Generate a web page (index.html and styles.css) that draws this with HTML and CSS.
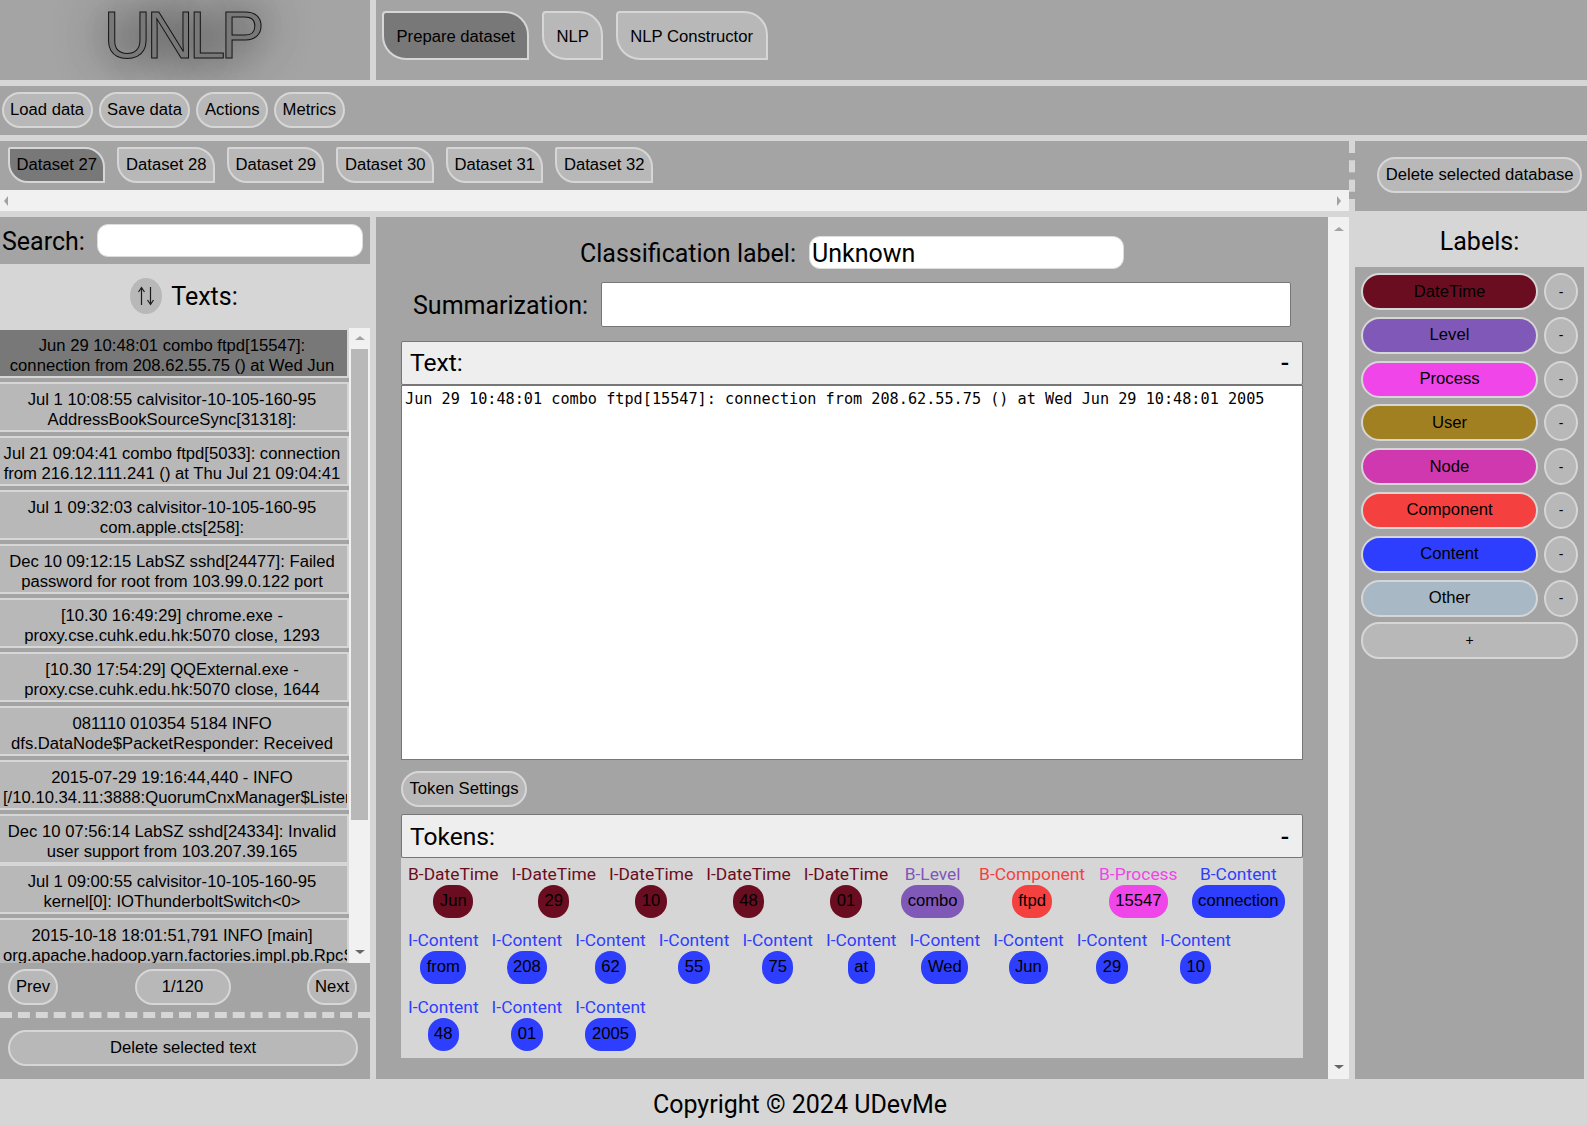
FILE: index.html
```html
<!DOCTYPE html>
<html lang="en">
<head>
<meta charset="utf-8">
<title>UNLP</title>
<link rel="stylesheet" href="styles.css">
</head>
<body>
<header class="top">
  <div class="logo"><span class="logo-text">UNLP</span></div>
  <nav class="nav">
    <button class="tab tab-big active">Prepare dataset</button>
    <button class="tab tab-big">NLP</button>
    <button class="tab tab-big">NLP Constructor</button>
  </nav>
</header>
<div class="toolbar">
  <button class="btn">Load data</button>
  <button class="btn">Save data</button>
  <button class="btn">Actions</button>
  <button class="btn">Metrics</button>
</div>
<div class="datasets">
  <div class="datasets-main">
    <div class="dataset-tabs">
      <button class="tab active">Dataset 27</button>
      <button class="tab">Dataset 28</button>
      <button class="tab">Dataset 29</button>
      <button class="tab">Dataset 30</button>
      <button class="tab">Dataset 31</button>
      <button class="tab">Dataset 32</button>
    </div>
    <div class="hscroll"><i class="arrow arrow-left"></i><i class="arrow arrow-right"></i></div>
  </div>
  <div class="datasets-side"><button class="btn">Delete selected database</button></div>
</div>
<main class="main">
  <aside class="left">
    <div class="search"><label class="h-text">Search:</label><input class="search-input" type="text"></div>
    <div class="texts-head">
      <button class="sort" aria-label="Sort">
        <svg class="sort-icon" width="18" height="20" viewBox="0 0 18 20" fill="none" stroke="#1a1a1a" stroke-width="1.2"><path d="M4.5 19V1.5M1.5 6 4.5 1.5 7.5 6"/><path d="M13.5 1V18.5M10.5 14 13.5 18.5 16.5 14"/></svg>
      </button>
      <span class="h-text">Texts:</span>
    </div>
    <div class="list-wrap">
      <div class="list">
        <div class="item selected">Jun 29 10:48:01 combo ftpd[15547]: connection from 208.62.55.75 () at Wed Jun 29 10:48:01 2005</div>
        <div class="item">Jul 1 10:08:55 calvisitor-10-105-160-95 AddressBookSourceSync[31318]: [ABSourceSyncManagerFromLocalStore]</div>
        <div class="item">Jul 21 09:04:41 combo ftpd[5033]: connection from 216.12.111.241 () at Thu Jul 21 09:04:41 2005</div>
        <div class="item">Jul 1 09:32:03 calvisitor-10-105-160-95 com.apple.cts[258]: com.apple.SocialPushAgent.AddressBookSync</div>
        <div class="item">Dec 10 09:12:15 LabSZ sshd[24477]: Failed password for root from 103.99.0.122 port 39544 ssh2</div>
        <div class="item">[10.30 16:49:29] chrome.exe - proxy.cse.cuhk.edu.hk:5070 close, 1293 bytes sent</div>
        <div class="item">[10.30 17:54:29] QQExternal.exe - proxy.cse.cuhk.edu.hk:5070 close, 1644 bytes sent</div>
        <div class="item">081110 010354 5184 INFO dfs.DataNode$PacketResponder: Received block blk_123</div>
        <div class="item">2015-07-29 19:16:44,440 - INFO [/10.10.34.11:3888:QuorumCnxManager$Listener@493]</div>
        <div class="item item-tight">Dec 10 07:56:14 LabSZ sshd[24334]: Invalid user support from 103.207.39.165</div>
        <div class="item">Jul 1 09:00:55 calvisitor-10-105-160-95 kernel[0]: IOThunderboltSwitch&lt;0&gt;</div>
        <div class="item">2015-10-18 18:01:51,791 INFO [main] org.apache.hadoop.yarn.factories.impl.pb.RpcServerFactoryPBImpl</div>
      </div>
      <div class="vscroll list-scroll"><i class="arrow arrow-up"></i><div class="thumb"></div><i class="arrow arrow-down"></i></div>
    </div>
    <div class="pager">
      <button class="btn">Prev</button>
      <button class="btn page-count">1/120</button>
      <button class="btn">Next</button>
    </div>
    <div class="delete-row"><button class="btn wide">Delete selected text</button></div>
  </aside>

  <section class="center">
    <div class="center-body">
      <div class="field-row">
        <label class="h-text">Classification label:</label>
        <input class="class-input" type="text" value="Unknown">
      </div>
      <div class="field-row summary-row">
        <label class="h-text">Summarization:</label>
        <input class="summary-input" type="text">
      </div>
      <div class="panel-head panel-text"><span>Text:</span><span class="collapse">-</span></div>
      <div class="text-box">Jun 29 10:48:01 combo ftpd[15547]: connection from 208.62.55.75 () at Wed Jun 29 10:48:01 2005</div>
      <div class="settings-row"><button class="btn">Token Settings</button></div>
      <div class="panel-head"><span>Tokens:</span><span class="collapse">-</span></div>
      <div class="tokens">
        <div class="tok c-date"><span class="tok-label">B-DateTime</span><span class="chip">Jun</span></div>
        <div class="tok c-date"><span class="tok-label">I-DateTime</span><span class="chip">29</span></div>
        <div class="tok c-date"><span class="tok-label">I-DateTime</span><span class="chip">10</span></div>
        <div class="tok c-date"><span class="tok-label">I-DateTime</span><span class="chip">48</span></div>
        <div class="tok c-date"><span class="tok-label">I-DateTime</span><span class="chip">01</span></div>
        <div class="tok c-level"><span class="tok-label">B-Level</span><span class="chip">combo</span></div>
        <div class="tok c-comp"><span class="tok-label">B-Component</span><span class="chip">ftpd</span></div>
        <div class="tok c-proc"><span class="tok-label">B-Process</span><span class="chip">15547</span></div>
        <div class="tok c-cont c-lead"><span class="tok-label">B-Content</span><span class="chip">connection</span></div>
        <div class="tok c-cont"><span class="tok-label">I-Content</span><span class="chip">from</span></div>
        <div class="tok c-cont"><span class="tok-label">I-Content</span><span class="chip">208</span></div>
        <div class="tok c-cont"><span class="tok-label">I-Content</span><span class="chip">62</span></div>
        <div class="tok c-cont"><span class="tok-label">I-Content</span><span class="chip">55</span></div>
        <div class="tok c-cont"><span class="tok-label">I-Content</span><span class="chip">75</span></div>
        <div class="tok c-cont"><span class="tok-label">I-Content</span><span class="chip">at</span></div>
        <div class="tok c-cont"><span class="tok-label">I-Content</span><span class="chip">Wed</span></div>
        <div class="tok c-cont"><span class="tok-label">I-Content</span><span class="chip">Jun</span></div>
        <div class="tok c-cont"><span class="tok-label">I-Content</span><span class="chip">29</span></div>
        <div class="tok c-cont"><span class="tok-label">I-Content</span><span class="chip">10</span></div>
        <div class="tok c-cont"><span class="tok-label">I-Content</span><span class="chip">48</span></div>
        <div class="tok c-cont"><span class="tok-label">I-Content</span><span class="chip">01</span></div>
        <div class="tok c-cont"><span class="tok-label">I-Content</span><span class="chip">2005</span></div>
      </div>
    </div>
    <div class="vscroll main-scroll"><i class="arrow arrow-up"></i><i class="arrow arrow-down"></i></div>
  </section>

  <aside class="right">
    <div class="labels-head h-text">Labels:</div>
    <div class="labels">
      <div class="label-row"><button class="btn pill l-date">DateTime</button><button class="btn minus">-</button></div>
      <div class="label-row"><button class="btn pill l-level">Level</button><button class="btn minus">-</button></div>
      <div class="label-row"><button class="btn pill l-proc">Process</button><button class="btn minus">-</button></div>
      <div class="label-row"><button class="btn pill l-user">User</button><button class="btn minus">-</button></div>
      <div class="label-row"><button class="btn pill l-node">Node</button><button class="btn minus">-</button></div>
      <div class="label-row"><button class="btn pill l-comp">Component</button><button class="btn minus">-</button></div>
      <div class="label-row"><button class="btn pill l-cont">Content</button><button class="btn minus">-</button></div>
      <div class="label-row"><button class="btn pill l-other">Other</button><button class="btn minus">-</button></div>
      <button class="btn add">+</button>
    </div>
  </aside>
</main>
<footer class="footer">Copyright © 2024 UDevMe</footer>
</body>
</html>
```
FILE: styles.css
```css
* { box-sizing: border-box; }
html, body { margin: 0; height: 1125px; overflow: hidden; }
body { background: #d6d6d6; color: #000; font-family: "Liberation Sans", Arial, sans-serif; font-size: 16.65px; }
button { font: inherit; color: #000; cursor: pointer; }
input { outline: none; }
.h-text { font-family: Roboto, sans-serif; font-size: 25px; }

.top { display: flex; height: 80px; }
.logo { width: 370px; background: #a4a4a4; display: flex; justify-content: center; overflow: hidden; padding-right: 7px; }
.logo-text { font-family: "Liberation Sans", Arial, sans-serif; font-size: 66px; line-height: 70px; letter-spacing: -5px; color: #787878; -webkit-text-stroke: 1px #111; text-shadow: 0 0 40px rgba(0,0,0,.7), 0 0 60px rgba(0,0,0,.35); }
.nav { margin-left: 6px; flex: 1; background: #a4a4a4; display: flex; gap: 12.5px; padding: 11px 6px; align-items: flex-start; }

.tab { background: #b8b8b8; border: 2px solid #d6d6d6; border-radius: 4px 24px 0 24px; height: 36px; padding: 0 14px; }
.tab-big { height: 49px; padding: 2px 12.5px 0; }
.tab.active { background: #787878; }

.btn { background: #b8b8b8; border: 2px solid #d6d6d6; border-radius: 18px; height: 36px; padding: 0 6.5px; white-space: nowrap; }

.toolbar { margin-top: 6px; height: 49px; background: #a4a4a4; display: flex; gap: 6px; align-items: flex-start; padding: 6px 0 0 1.5px; }

.datasets { margin-top: 6px; height: 70px; display: flex; }
.datasets-main { width: 1349px; }
.dataset-tabs { height: 49px; background: #a4a4a4; display: flex; gap: 12px; padding: 6px 8px; }
.dataset-tabs .tab { padding: 0 6.5px; border-radius: 2px 20px 0 20px; }
.hscroll { height: 21px; background: #f1f1f1; display: flex; justify-content: space-between; align-items: center; padding: 0 8px 0 4px; }
.datasets-side { flex: 1; background: #a4a4a4; border-left: 6px dashed #d6d6d6; display: flex; justify-content: flex-end; align-items: flex-start; padding: 16px 5px 0 0; }

.arrow { display: block; width: 0; height: 0; border: 4px solid transparent; }
.arrow-left { border-left: 0; border-right-color: #a3a3a3; border-width: 5px 4px 5px 0; }
.arrow-right { border-right: 0; border-left-color: #a3a3a3; border-width: 5px 0 5px 4px; }
.arrow-up { border-top: 0; border-bottom-color: #a3a3a3; border-width: 0 5px 4px 5px; }
.arrow-down { border-bottom: 0; border-top-color: #666; border-width: 4px 5px 0 5px; }

.main { margin-top: 6px; height: 862px; display: flex; }
.left { width: 370px; display: flex; flex-direction: column; }
.search { height: 47px; background: #a4a4a4; display: flex; align-items: center; padding: 1px 7px 0 2px; justify-content: space-between; }
.search-input { width: 266px; height: 33px; margin-top: -1px; border: 1px solid #ddd; border-radius: 11px; background: #fff; }
.texts-head { height: 64px; display: flex; justify-content: center; align-items: center; gap: 9px; padding-right: 2px; }
.sort { width: 32px; height: 36px; border: 0; padding: 0; border-radius: 50%; background: #b8b8b8; display: flex; align-items: center; justify-content: center; }
.sort-icon { display: block; }
.list-wrap { height: 635px; display: flex; }
.list { width: 349px; background: #a4a4a4; overflow: hidden; }
.item { height: 50px; margin-bottom: 4px; border: 2px solid #d6d6d6; border-left: 0; background: #b8b8b8; padding: 6px 6px 0 3px; text-align: center; line-height: 20px; overflow: hidden; }
.item-tight { margin-bottom: 0; }
.item.selected { background: #787878; }
.vscroll { width: 21px; background: #f1f1f1; display: flex; flex-direction: column; align-items: center; justify-content: space-between; padding: 8px 0; flex-shrink: 0; }
.main-scroll { padding: 10px 0; }
.list-scroll { justify-content: flex-start; padding: 8px 0 0; }
.list-scroll .arrow-down { margin-top: 130px; }
.thumb { width: 17px; height: 471px; background: #b8b8b8; margin-top: 9px; flex-shrink: 0; }
.pager { height: 49px; background: #a4a4a4; display: flex; justify-content: space-between; padding: 6px 13px 0 8px; }
.page-count { width: 96px; }
.pager .btn:first-child, .pager .btn:last-child { width: 50px; padding: 0; }
.delete-row { flex: 1; background: #a4a4a4; border-top: 6px dashed #d6d6d6; padding: 12px 12px 0 8px; }
.wide { width: 100%; }

.center { width: 973px; margin-left: 6px; background: #a4a4a4; display: flex; }
.center-body { flex: 1; padding: 19px 25px 0; }
.field-row { display: flex; justify-content: center; align-items: center; gap: 13px; height: 33px; }
.field-row label { padding-top: 2px; }
.summary-row { height: 45px; margin-top: 13px; margin-bottom: 14px; }
.class-input { width: 315px; height: 33px; border: 1px solid #ddd; border-radius: 11px; background: #fff; font-family: Roboto, sans-serif; font-size: 25px; padding: 2px 2px 0; }
.summary-input { width: 690px; height: 45px; border: 1px solid #777; border-radius: 2px; background: #fff; }
.panel-head { height: 44px; background: #eee; border: 1px solid #777; border-radius: 2px; display: flex; justify-content: space-between; align-items: center; padding: 0 13px 0 8px; font-family: Roboto, sans-serif; font-size: 24.6px; width: 902px; }
.panel-text { padding-bottom: 2px; }
.collapse { font-weight: 500; }
.text-box { width: 902px; height: 375px; background: #fff; border: 1px solid #777; padding: 3px 3px; font-family: "DejaVu Sans Mono", monospace; font-size: 15.2px; line-height: 20px; }
.settings-row { height: 54px; padding-top: 11px; }
.tokens { width: 902px; height: 200px; background: #d6d6d6; display: flex; flex-wrap: wrap; align-content: flex-start; gap: 0 13px; padding: 4px 7px 0; font-family: Roboto, sans-serif; font-size: 17.4px; }
.tok { display: flex; flex-direction: column; align-items: center; height: 66.4px; }
.tok-label { line-height: 24px; }
.chip { height: 33px; margin-top: -1px; padding: 0 6.5px; line-height: 32px; border-radius: 16px; text-align: center; font-family: "Liberation Sans", Arial, sans-serif; font-size: 16.65px; }
.c-date .tok-label { color: #6b0d20; }
.c-date .chip { background: #6b0d20; }
.c-level .tok-label { color: #8058b8; }
.c-level .chip { background: #8058b8; }
.c-comp { margin-left: 2px; }
.c-comp .tok-label { color: #f54040; }
.c-comp .chip { background: #f54040; }
.c-proc { margin-left: 1px; }
.c-proc .tok-label { color: #f045e8; }
.c-proc .chip { background: #f045e8; }
.c-lead { margin-left: 1px; }
.c-cont .tok-label { color: #2d3eff; }
.c-cont .chip { background: #2d3eff; }

.right { margin-left: 6px; width: 229px; display: flex; flex-direction: column; }
.labels-head { height: 50px; text-align: center; line-height: 50px; padding-left: 20px; }
.labels { flex: 1; background: #a4a4a4; padding: 6px 6px 0 6px; }
.label-row { display: flex; justify-content: space-between; height: 43.8px; }
.pill { width: 177px; height: 37px; border-radius: 19px; }
.minus { width: 34px; height: 37px; border-radius: 50%; padding: 0; font-size: 14px; }
.add { width: 217px; height: 37px; border-radius: 18px; font-size: 14px; margin-top: -1px; padding-bottom: 2px; }
.l-date { background: #6b0d20; }
.l-level { background: #8058b8; }
.l-proc { background: #f045e8; }
.l-user { background: #a08020; }
.l-node { background: #d038b0; }
.l-comp { background: #f54040; }
.l-cont { background: #2d3eff; }
.l-other { background: #a8b8c4; }

.footer { height: 46px; text-align: center; line-height: 52px; font-family: Roboto, sans-serif; font-size: 25px; padding-left: 13px; }
```
